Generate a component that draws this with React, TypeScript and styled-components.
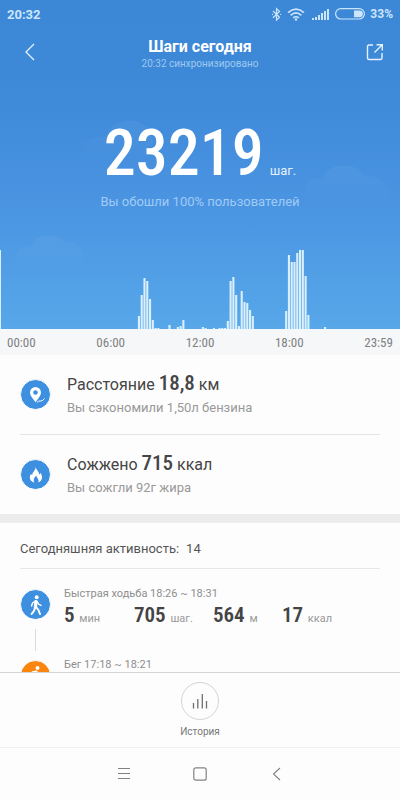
import React from 'react';
import styled, { createGlobalStyle } from 'styled-components';

const GlobalStyle = createGlobalStyle`
  *, *::before, *::after { box-sizing: border-box; }
  body { margin: 0; background: #fdfdfd; font-family: Roboto, sans-serif; }
  button { border: 0; padding: 0; background: none; font: inherit; color: inherit; cursor: pointer; }
  svg { display: block; }
  h1, h2, p, ul { margin: 0; padding: 0; font-weight: 400; }
`;

const numeric = `font-family: "Roboto Condensed", Roboto, sans-serif;`;

const Screen = styled.div`
  height: 100vh;
  display: flex;
  flex-direction: column;
  background: #fdfdfd;
`;

const Content = styled.main`
  flex: 1;
  min-height: 0;
  overflow-y: auto;
  scrollbar-width: none;
`;

const Hero = styled.section`
  position: relative;
  background: linear-gradient(#3c87d6 0%, #3d88d7 24%, #4a94e2 62%, #57a7e9 100%);
  color: #fff;
  border-bottom: 1px solid #f2f8fd;
`;

const Clouds = styled.svg`
  position: absolute;
  inset: 0;
  width: 100%;
  height: 100%;
`;

const StatusBar = styled.div`
  position: relative;
  height: 28px;
  padding: 0 7px;
  display: flex;
  align-items: center;
  justify-content: space-between;
  font-size: 13px;
  font-weight: 700;
  color: #cbe6fc;
`;

const StatusIcons = styled.div`
  display: flex;
  align-items: center;
  gap: 5px;
  font-size: 12px;
`;

const Header = styled.header`
  position: relative;
  height: 48px;
  padding: 0 16px;
  display: grid;
  grid-template-columns: 28px 1fr 28px;
  align-items: center;
`;

const HeaderButton = styled.button<{ $align?: string }>`
  width: 28px;
  height: 28px;
  display: grid;
  align-items: center;
  justify-items: ${p => p.$align ?? 'center'};
`;

const Heading = styled.div`
  padding-top: 4px;
  text-align: center;
`;

const Title = styled.h1`
  && { font-size: 16px; font-weight: 700; }
  line-height: 20px;
`;

const SyncTime = styled.p`
  font-size: 10px;
  line-height: 14px;
  color: #9fc9f2;
`;

const StepTotal = styled.div`
  position: relative;
  padding-top: 44px;
  display: flex;
  justify-content: center;
  align-items: baseline;
  gap: 6px;
`;

const StepCount = styled.strong`
  ${numeric}
  font-size: 64px;
  line-height: 68px;
  font-weight: 500;
`;

const StepUnit = styled.span`
  font-size: 13px;
  color: #e4f1fd;
`;

const Rank = styled.p`
  position: relative;
  margin-top: 5px;
  text-align: center;
  font-size: 13px;
  line-height: 18px;
  color: #a0cbf5;
`;

const Chart = styled.svg`
  position: relative;
  width: 100%;
  height: 80px;
  margin-top: 38px;
`;

const Axis = styled.div`
  ${numeric}
  height: 25px;
  padding: 0 7px;
  display: flex;
  justify-content: space-between;
  align-items: center;
  background: #f6f7f9;
  font-size: 13px;
  color: #808183;
`;

const Summary = styled.section`
  padding: 0 20px;
`;

const SummaryRow = styled.div`
  height: 79px;
  display: flex;
  align-items: center;
  gap: 16px;
  & + & { height: 80px; border-top: 1px solid #e4e4e4; }
`;

const Disc = styled.div<{ $color: string }>`
  flex: none;
  width: 31px;
  height: 31px;
  border: 1px solid #fdfdfd;
  border-radius: 50%;
  background: ${p => p.$color};
  display: grid;
  place-items: center;
`;

const SummaryTitle = styled.h2`
  && { font-size: 16px; }
  line-height: 24px;
  color: #454545;
`;

const SummaryValue = styled.strong`
  ${numeric}
  font-size: 21px;
  line-height: 24px;
  font-weight: 500;
`;

const SummaryNote = styled.p`
  font-size: 13px;
  line-height: 22px;
  color: #999;
`;

const Divider = styled.div`
  height: 9px;
  background: #ececec;
`;

const Activity = styled.section`
  padding: 0 20px;
`;

const ActivityTitle = styled.h2`
  height: 46px;
  display: flex;
  align-items: center;
  gap: 7px;
  padding-top: 6px;
  border-bottom: 1px solid #e8e8e8;
  && { font-size: 13px; }
  color: #555;
`;

const ActivityList = styled.ul`
  list-style: none;
  padding-top: 16px;
`;

const ActivityItem = styled.li`
  min-height: 71px;
  display: flex;
  gap: 13px;
`;

const Track = styled.div`
  display: flex;
  flex-direction: column;
  align-items: center;
  gap: 9px;
  padding-top: 4px;
`;

const Connector = styled.div`
  width: 1px;
  height: 22px;
  background: #dcdcdc;
`;

const ActivityName = styled.p`
  font-size: 11px;
  line-height: 18px;
  color: #8e8e8e;
`;

const Metrics = styled.div`
  display: grid;
  grid-template-columns: 70px 79px 69px auto;
  line-height: 24px;
`;

const Metric = styled.div`
  font-size: 11px;
  color: #999;
  white-space: nowrap;
`;

const MetricValue = styled.strong`
  ${numeric}
  margin-right: 2px;
  font-size: 21px;
  font-weight: 600;
  color: #444;
`;

const Footer = styled.footer`
  height: 75px;
  flex: none;
  border-top: 1px solid #d4d4d4;
  display: flex;
  justify-content: center;
  align-items: flex-start;
  padding-top: 9px;
`;

const HistoryButton = styled.button`
  && { font-size: 10px; color: #777; }
  display: flex;
  flex-direction: column;
  align-items: center;
  gap: 4px;
  line-height: 16px;
`;

const HistoryRing = styled.span`
  width: 38px;
  height: 38px;
  border: 1px solid #d4d4d4;
  border-radius: 50%;
  display: grid;
  place-items: center;
`;

const SystemNav = styled.nav`
  height: 53px;
  flex: none;
  border-top: 1px solid #f1f1f1;
  display: flex;
  justify-content: center;
  align-items: center;
  gap: 52px;
`;

const NavButton = styled.button`
  width: 24px;
  height: 24px;
  display: grid;
  place-items: center;
`;

// Step activity in ten-minute slots: [slot of the day, bar height].
const SLOT_COUNT = 144;
const bars: [number, number][] = [
  [50, 13], [51, 34], [52, 51], [53, 48], [54, 30], [55, 9], [56, 1], [57, 1], [61, 4],
  [64, 2], [65, 3], [66, 9], [73, 2], [74, 1], [77, 1], [79, 1], [80, 1], [81, 1], [82, 8],
  [83, 48], [84, 52], [85, 34], [86, 3], [87, 38], [88, 27], [89, 26], [90, 19], [91, 13],
  [103, 18], [104, 74], [105, 67], [106, 67], [107, 76], [108, 79], [109, 79], [110, 53],
  [111, 14], [117, 2],
];

const activities = [
  {
    name: 'Быстрая ходьба 18:26 ~ 18:31', color: '#3d8fe0', run: false,
    metrics: [['5', 'мин'], ['705', 'шаг.'], ['564', 'м'], ['17', 'ккал']],
  },
  { name: 'Бег 17:18 ~ 18:21', color: '#fb860f', run: true, metrics: [] },
];

const WalkIcon = () => (
  <svg width="22" height="24" viewBox="0 0 22 24" fill="none" stroke="#fff" strokeLinecap="round" strokeLinejoin="round">
    <circle cx="11.7" cy="4.3" r="2" fill="#fff" stroke="none" />
    <path d="M11 8.5 10.4 14.5" strokeWidth="3.2" />
    <path d="M10.2 8 7.4 10.2 6.6 13M12 8.4 13.6 11.2 16 12.4" strokeWidth="1.4" />
    <path d="M10 14.5 9.2 17.6 6.6 21M11.2 14.2 13.4 17 15 21" strokeWidth="2" />
  </svg>
);

const RunIcon = () => (
  <svg width="22" height="24" viewBox="0 0 22 24" fill="none" stroke="#fff" strokeLinecap="round" strokeLinejoin="round">
    <circle cx="12.5" cy="4" r="2" fill="#fff" stroke="none" />
    <path d="M11.4 8.6 10 13.6" strokeWidth="3.2" />
    <path d="M11.2 7.2 7.4 8 5.8 11M12.6 8.6 14.4 11 17 10.6" strokeWidth="1.5" />
    <path d="M10 13.6 8.4 16.6 4.8 17M10.6 13.8 13.4 16.2 12.6 20" strokeWidth="2" />
  </svg>
);

export default function App() {
  return (
    <Screen>
      <GlobalStyle />
      <Content>
        <Hero>
          <Clouds viewBox="0 0 400 330" preserveAspectRatio="none" fill="url(#cloud)" aria-hidden="true">
            <defs>
              <linearGradient id="cloud" x1="0" y1="0" x2="0" y2="1">
                <stop offset="0" stopColor="#fff" stopOpacity=".045" />
                <stop offset="1" stopColor="#fff" stopOpacity="0" />
              </linearGradient>
            </defs>
            <path d="M17 270V254Q20 247 31 247Q35 236 48 236Q60 236 64 243Q83 243 83 257V270Z" />
            <path d="M306 205V187Q308 179 322 179Q328 166 344 166Q358 166 364 176Q386 177 388 191V205Z" />
            <path d="M84 160V147Q87 137 106 137Q112 121 130 121Q145 121 151 132L155 160Z" />
          </Clouds>
          <StatusBar>
            <span>20:32</span>
            <StatusIcons>
              <svg width="11" height="15" viewBox="0 0 11 15" fill="none" stroke="currentColor" strokeWidth="1.2">
                <path d="M2 4 8.5 10.3 5.5 13.2V1.6L8.5 4.5 2 10.8" />
                <path d="M1 7.4h1M9.2 7.4h1" />
              </svg>
              <svg width="18" height="13" viewBox="0 0 18 13" fill="none" stroke="currentColor" strokeWidth="1.6">
                <path d="M1 4.6Q9-2.4 17 4.6M3.6 7.3Q9 2.6 14.4 7.3M6.2 9.8Q9 7.6 11.8 9.8" />
                <circle cx="9" cy="11.5" r="1.2" fill="currentColor" stroke="none" />
              </svg>
              <svg width="20" height="13" viewBox="0 0 20 13" fill="currentColor">
                <path d="M2 10h2v2H2zM5 9h2v3H5zM8 7h2v5H8zM11 5h2v7h-2zM14 3h2v9h-2zM17 1h2v11h-2z" />
              </svg>
              <svg width="30" height="12" viewBox="0 0 30 12">
                <rect x=".6" y=".6" width="28.8" height="10.4" rx="5.2" fill="none" stroke="currentColor" strokeWidth="1.2" />
                <path d="M19 2.4h5.5a3.4 3.4 0 0 1 0 6.8H19z" fill="currentColor" />
              </svg>
              <span>33%</span>
            </StatusIcons>
          </StatusBar>
          <Header>
            <HeaderButton aria-label="Назад">
              <svg width="12" height="18" viewBox="0 0 12 18" fill="none" stroke="#e4f2ff" strokeWidth="1.3">
                <path d="M10 1 2 9 10 17" />
              </svg>
            </HeaderButton>
            <Heading>
              <Title>Шаги сегодня</Title>
              <SyncTime>20:32 синхронизировано</SyncTime>
            </Heading>
            <HeaderButton aria-label="Поделиться" $align="end">
              <svg width="18" height="18" viewBox="0 0 18 18" fill="none" stroke="#e4f2ff" strokeWidth="1.4">
                <path d="M7 2H3Q1.5 2 1.5 3.5V15Q1.5 16.5 3 16.5H14.5Q16 16.5 16 15V10" />
                <path d="M10.5 1.7H16.3V7.5M16 2 8.5 9.5" />
              </svg>
            </HeaderButton>
          </Header>
          <StepTotal>
            <StepCount>23219</StepCount>
            <StepUnit>шаг.</StepUnit>
          </StepTotal>
          <Rank>Вы обошли 100% пользователей</Rank>
          <Chart viewBox="0 0 400 80" preserveAspectRatio="none" fill="#d9effc" role="img" aria-label="Шаги за день">
            <rect x="0" y="1" width="1" height="79" />
            {bars.map(([slot, height]) => (
              <rect key={slot} x={(slot * 400) / SLOT_COUNT - 1} y={80 - height} width="2.1" height={height} />
            ))}
          </Chart>
        </Hero>
        <Axis>
          {['00:00', '06:00', '12:00', '18:00', '23:59'].map(t => <span key={t}>{t}</span>)}
        </Axis>
        <Summary>
          <SummaryRow>
            <Disc $color="#3d8fe0">
              <svg width="20" height="20" viewBox="0 0 20 20">
                <path fillRule="evenodd" fill="#fff" d="M9.5 2a5.5 5.5 0 0 0-5.5 5.4C4 11 8 14.2 9.7 17.5 11 14.2 15 11 15 7.4A5.5 5.5 0 0 0 9.5 2Zm0 3.2a2.3 2.3 0 1 1 0 4.6 2.3 2.3 0 0 1 0-4.6Z" />
                <path d="M11 17.5Q12.5 15.5 14.5 16T18.5 13.5" fill="none" stroke="#fff" strokeWidth="1" />
              </svg>
            </Disc>
            <div>
              <SummaryTitle>Расстояние <SummaryValue>18,8</SummaryValue> км</SummaryTitle>
              <SummaryNote>Вы сэкономили 1,50л бензина</SummaryNote>
            </div>
          </SummaryRow>
          <SummaryRow>
            <Disc $color="#3d8fe0">
              <svg width="18" height="20" viewBox="0 0 18 20" fill="#fff">
                <path d="M8.7 2C9.2 5 12 6.5 12.3 9.5Q13.3 9 13.2 7.8C15 10 15.4 12 14.8 14Q14 16.8 11.2 17.6Q12.3 15.3 10.8 13.4Q9.4 12 9.3 10.5C7.4 12 5.8 15 7.4 17.7Q3 16.5 2.8 12.6Q2.8 10.5 4 8.8Q4.4 10 5.2 10.3C5 7 8.8 5.5 8.7 2Z" />
              </svg>
            </Disc>
            <div>
              <SummaryTitle>Сожжено <SummaryValue>715</SummaryValue> ккал</SummaryTitle>
              <SummaryNote>Вы сожгли 92г жира</SummaryNote>
            </div>
          </SummaryRow>
        </Summary>
        <Divider />
        <Activity>
          <ActivityTitle><span>Сегодняшняя активность:</span><span>14</span></ActivityTitle>
          <ActivityList>
            {activities.map(a => (
              <ActivityItem key={a.name}>
                <Track>
                  <Disc $color={a.color}>{a.run ? <RunIcon /> : <WalkIcon />}</Disc>
                  {!a.run && <Connector />}
                </Track>
                <div>
                  <ActivityName>{a.name}</ActivityName>
                  <Metrics>
                    {a.metrics.map(([value, unit]) => (
                      <Metric key={unit}><MetricValue>{value}</MetricValue> {unit}</Metric>
                    ))}
                  </Metrics>
                </div>
              </ActivityItem>
            ))}
          </ActivityList>
        </Activity>
      </Content>
      <Footer>
        <HistoryButton>
          <HistoryRing>
            <svg width="16" height="16" viewBox="0 0 16 16" fill="none" stroke="#707070" strokeWidth="1.3">
              <path d="M1.5 15.5V10M5.8 15.5V6M10.3 15.5V1M14.5 15.5V8" />
            </svg>
          </HistoryRing>
          История
        </HistoryButton>
      </Footer>
      <SystemNav>
        <NavButton aria-label="Меню">
          <svg width="14" height="12" viewBox="0 0 14 12" fill="none" stroke="#828282">
            <path d="M1 .5h12M1 5.5h12M1 10.5h12" />
          </svg>
        </NavButton>
        <NavButton aria-label="Домой">
          <svg width="14" height="14" viewBox="0 0 14 14" fill="none" stroke="#828282" strokeWidth="1.2">
            <rect x=".8" y=".8" width="12.4" height="12.4" rx="2" />
          </svg>
        </NavButton>
        <NavButton aria-label="Назад">
          <svg width="9" height="14" viewBox="0 0 9 14" fill="none" stroke="#828282" strokeWidth="1.1">
            <path d="M8 1 1.5 7 8 13" />
          </svg>
        </NavButton>
      </SystemNav>
    </Screen>
  );
}
